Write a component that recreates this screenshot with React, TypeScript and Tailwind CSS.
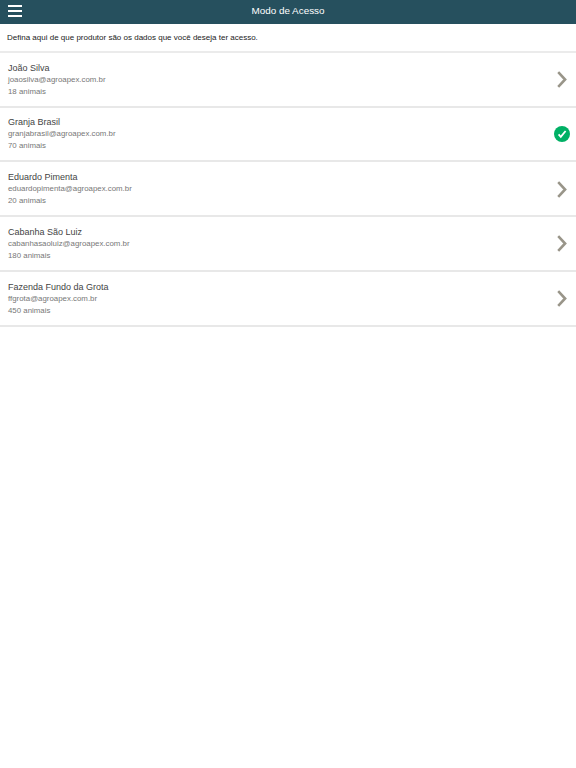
interface Producer {
  name: string;
  email: string;
  animals: number;
  selected?: boolean;
}

const producers: Producer[] = [
  { name: "João Silva", email: "joaosilva@agroapex.com.br", animals: 18 },
  { name: "Granja Brasil", email: "granjabrasil@agroapex.com.br", animals: 70, selected: true },
  { name: "Eduardo Pimenta", email: "eduardopimenta@agroapex.com.br", animals: 20 },
  { name: "Cabanha São Luiz", email: "cabanhasaoluiz@agroapex.com.br", animals: 180 },
  { name: "Fazenda Fundo da Grota", email: "ffgrota@agroapex.com.br", animals: 450 },
];

function Chevron() {
  return (
    <svg viewBox="0 0 10 17" className="h-[17px] w-[10px]" fill="none" stroke="#999589" strokeWidth="2.6">
      <path d="M1.2 1.2l6.9 7.3-6.9 7.3" />
    </svg>
  );
}

function CheckMark() {
  return (
    <svg viewBox="0 0 16 16" className="-mr-[3px] size-4">
      <circle cx="8" cy="8" r="8" fill="#00b065" />
      <path d="M4.6 8.4l2.2 2.4 4.8-5.8" fill="none" stroke="white" strokeWidth="1.8" />
    </svg>
  );
}

export default function App() {
  return (
    <div className="min-h-screen bg-white font-['Liberation_Sans',Arial,sans-serif]">
      <header className="grid h-[23.5px] grid-cols-3 items-center bg-[#26505e] px-2">
        <button className="flex w-[14px] flex-col gap-[3px] pb-px" aria-label="Menu">
          <span className="h-[2px] bg-white" />
          <span className="h-[2px] bg-white" />
          <span className="h-[2px] bg-white" />
        </button>
        <h1 className="pb-px text-center text-[9.9px] leading-[14px] text-white">Modo de Acesso</h1>
      </header>

      <p className="flex h-[29.3px] items-center border-b-2 border-[#ebebeb] px-[7px] pt-[2px] text-[8px] text-[#222]">
        Defina aqui de que produtor são os dados que você deseja ter acesso.
      </p>

      <ul>
        {producers.map((p) => (
          <li key={p.email} className="flex h-[54.75px] items-center justify-between border-b-2 border-[#e8e8e8] pt-px pr-[9px] pl-2">
            <div className="pt-px">
              <h2 className="text-[9px] leading-[11px] text-[#444]">{p.name}</h2>
              <p className="text-[7.87px] leading-3 text-[#777]">{p.email}</p>
              <p className="text-[7.87px] leading-3 text-[#777]">{p.animals} animais</p>
            </div>
            {p.selected ? <CheckMark /> : <Chevron />}
          </li>
        ))}
      </ul>
    </div>
  );
}
